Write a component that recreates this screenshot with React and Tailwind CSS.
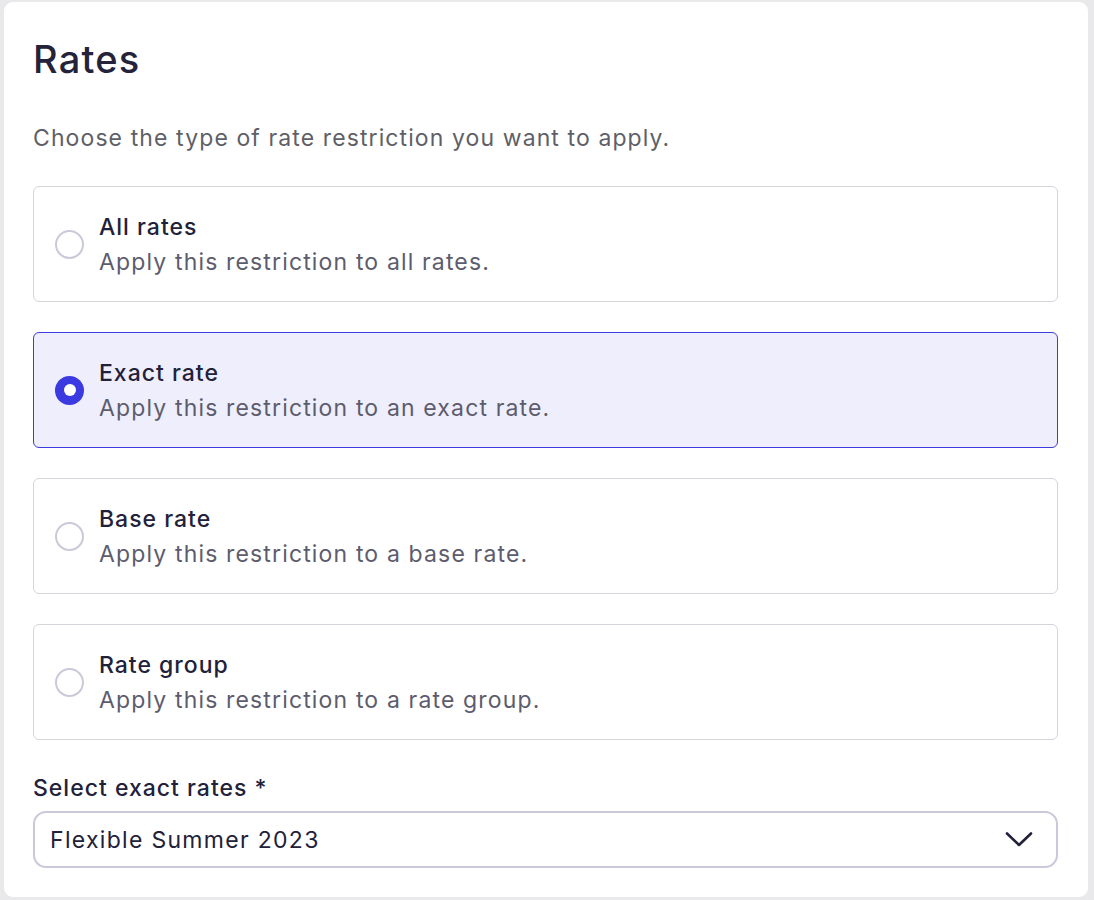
import React, { useState } from "react";

const options = [
  { id: "all", title: "All rates", desc: "Apply this restriction to all rates." },
  { id: "exact", title: "Exact rate", desc: "Apply this restriction to an exact rate." },
  { id: "base", title: "Base rate", desc: "Apply this restriction to a base rate." },
  { id: "group", title: "Rate group", desc: "Apply this restriction to a rate group." },
];

function Radio({ checked }) {
  return checked ? (
    <span className="flex h-[29px] w-[29px] shrink-0 items-center justify-center rounded-full bg-[#3b3ae0]">
      <span className="h-[12px] w-[12px] rounded-full bg-white" />
    </span>
  ) : (
    <span className="h-[29px] w-[29px] shrink-0 rounded-full border-2 border-[#cbc9d9] bg-white" />
  );
}

export default function App() {
  const [selected, setSelected] = useState("exact");

  return (
    <div
      className="min-h-[900px] bg-[#e9e9ec] pt-[2px] pl-[4px] pr-[6px] pb-[3px]"
      style={{ fontFamily: "Inter, 'Noto Sans', sans-serif" }}
    >
      <div className="h-[895px] rounded-[9px] bg-white pl-[29px] pr-[30px] pt-[34px]">
        <h1 className="text-[38px] leading-[46px] font-medium tracking-[1.2px] text-[#24233a]">
          Rates
        </h1>
        <p className="mt-[40px] text-[23px] leading-[32px] tracking-[1.1px] text-[#605f67]">
          Choose the type of rate restriction you want to apply.
        </p>

        <div className="mt-[32px] flex flex-col gap-[30px]">
          {options.map((o) => {
            const checked = o.id === selected;
            return (
              <button
                key={o.id}
                type="button"
                onClick={() => setSelected(o.id)}
                className={
                  "flex h-[116px] w-full items-center gap-[15px] rounded-[6px] border pl-[21px] text-left " +
                  (checked
                    ? "border-[#3d3cdc] bg-[#efeefc]"
                    : "border-[#d6d5dc] bg-white")
                }
              >
                <Radio checked={checked} />
                <span className="flex flex-col pt-[1px]">
                  <span className="text-[23px] leading-[35px] font-medium tracking-[1px] text-[#22213a]">
                    {o.title}
                  </span>
                  <span className="text-[23px] leading-[35px] tracking-[1.15px] text-[#5d5c6d]">
                    {o.desc}
                  </span>
                </span>
              </button>
            );
          })}
        </div>

        <div className="mt-[32px]">
          <label className="block text-[23px] leading-[32px] font-medium tracking-[1px] text-[#22213a]">
            Select exact rates *
          </label>
          <div className="mt-[7px] flex h-[57px] w-full items-center justify-between rounded-[13px] border-2 border-[#cac8da] bg-white pl-[15px] pr-[23px]">
            <span className="text-[23px] leading-[32px] tracking-[1.3px] text-[#22213a]">
              Flexible Summer 2023
            </span>
            <svg width="28" height="17" viewBox="0 0 28 17" fill="none">
              <polyline
                points="2,2.5 14,14 26,2.5"
                stroke="#22213a"
                strokeWidth="2.6"
                strokeLinecap="round"
                strokeLinejoin="round"
              />
            </svg>
          </div>
        </div>
      </div>
    </div>
  );
}
